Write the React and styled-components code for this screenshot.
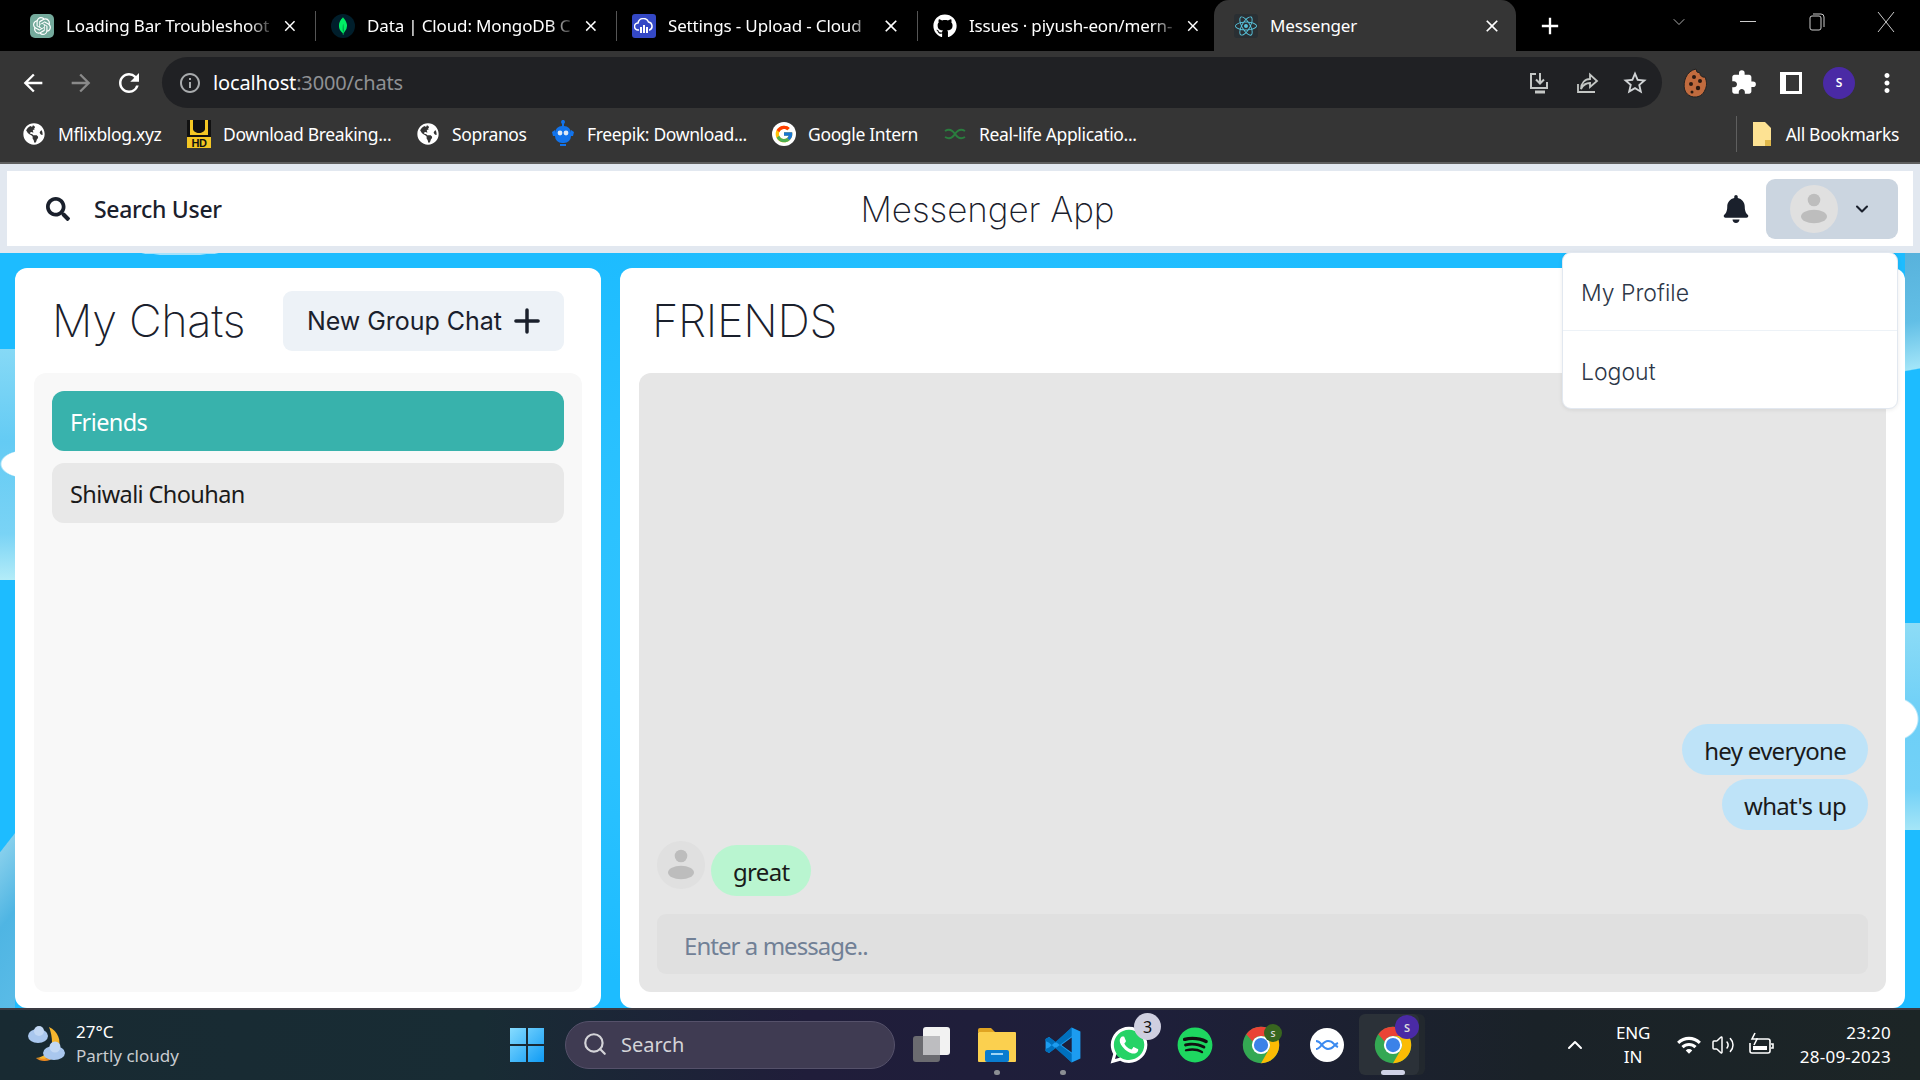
import styled, { createGlobalStyle } from "styled-components";
import {
  FaBell,
  FaSearch,
  FaGithub,
  FaReact,
  FaGlobeAmericas,
  FaWhatsapp,
  FaSpotify,
} from "react-icons/fa";
import { SiOpenai, SiMongodb } from "react-icons/si";
import { FcGoogle } from "react-icons/fc";
import {
  MdArrowBack,
  MdArrowForward,
  MdRefresh,
  MdInfoOutline,
  MdStarBorder,
  MdExtension,
  MdMoreVert,
  MdClose,
  MdAdd,
  MdWifi,
} from "react-icons/md";
import { ChevronDown, ChevronUp, Search, Volume2, Plus } from "lucide-react";

const UI = `"Noto Sans", "Open Sans", sans-serif`;
const HEAD = `Inter, "Noto Sans", sans-serif`;

const GlobalStyle = createGlobalStyle`
  * { box-sizing: border-box; }
  html, body { margin: 0; padding: 0; overflow: hidden; }
  body { font-family: ${UI}; }
`;

const Page = styled.div`
  width: 1920px;
  height: 1080px;
  display: flex;
  flex-direction: column;
  overflow: hidden;
`;

/* browser chrome */
const TabStrip = styled.div`
  height: 51px;
  background: #000;
  display: flex;
  padding-left: 15px;
  color: #fff;
`;
const Tab = styled.div`
  position: relative;
  width: ${(p) => (p.$active ? "302px" : "301px")};
  margin-left: ${(p) => (p.$active ? "-5px" : "0")};
  padding: 0 ${(p) => (p.$active ? "14px" : "17px")} 0 ${(p) => (p.$active ? "20px" : "15px")};
  display: flex;
  align-items: center;
  gap: 12px;
  font-size: 17px;
  letter-spacing: -0.15px;
  background: ${(p) => (p.$active ? "#353535" : "transparent")};
  border-radius: 15px 15px 0 0;
  z-index: ${(p) => (p.$active ? 1 : 0)};
  &::after {
    content: "";
    display: ${(p) => (p.$sep ? "block" : "none")};
    position: absolute;
    right: 0;
    top: 11px;
    height: 30px;
    width: 1px;
    background: #555;
  }
`;
const TabTitle = styled.span`
  flex: 1;
  white-space: nowrap;
  mask-image: ${(p) =>
    p.$fade ? "linear-gradient(90deg, #000 90%, rgba(0, 0, 0, 0.25) 100%)" : "none"};
`;
const Favicon = styled.span`
  width: 24px;
  height: 24px;
  flex: none;
  display: flex;
  align-items: center;
  justify-content: center;
  border-radius: ${(p) => p.$radius || "3px"};
  background: ${(p) => p.$bg || "transparent"};
`;
const NewTab = styled.div`
  margin-left: 20px;
  height: 51px;
  display: flex;
  align-items: center;
`;
const WinControls = styled.div`
  margin-left: auto;
  display: flex;
`;
const WinSlot = styled.div`
  width: 68.75px;
  height: 44px;
  display: flex;
  align-items: center;
  justify-content: center;
  color: #ccc;
`;

const Toolbar = styled.div`
  height: 57px;
  padding: 6px 0 0 9px;
  background: #353535;
  display: flex;
  align-items: center;
  color: #fff;
`;
const ToolSlot = styled.div`
  width: 48px;
  height: 48px;
  flex: none;
  display: flex;
  align-items: center;
  justify-content: center;
  color: ${(p) => p.$color || "#fff"};
`;
const Omnibox = styled.div`
  width: 1500px;
  height: 51px;
  margin: 0 9px;
  padding: 0 3px 0 16px;
  background: #202124;
  border-radius: 26px;
  display: flex;
  align-items: center;
`;
const UrlText = styled.div`
  margin-left: 11px;
  flex: 1;
  font-size: 20px;
  letter-spacing: -0.15px;
  color: #8f9194;
  & b {
    font-weight: 400;
    color: #fff;
  }
`;
const ProfileDot = styled.div`
  width: 32px;
  height: 32px;
  border-radius: 50%;
  background: #4a2aa5;
  color: #fff;
  font-size: 12px;
  font-weight: 600;
  display: flex;
  align-items: center;
  justify-content: center;
`;

const BookmarkBar = styled.div`
  height: 56px;
  padding: 0 0 2px 22px;
  background: #353535;
  border-bottom: 2px solid #5f5f5f;
  display: flex;
  align-items: center;
  color: #fff;
  font-size: 17.5px;
  letter-spacing: -0.35px;
`;
const Bookmark = styled.div`
  display: flex;
  align-items: center;
  gap: 12px;
  margin-right: 24px;
  white-space: nowrap;
`;
const BookmarkIcon = styled.span`
  width: 24px;
  height: 28px;
  flex: none;
  display: flex;
  align-items: center;
  justify-content: center;
`;
const GoogleChip = styled.span`
  width: 24px;
  height: 24px;
  border-radius: 50%;
  background: #fff;
  display: flex;
  align-items: center;
  justify-content: center;
`;
const BookmarkLabel = styled.span`
  display: block;
  width: ${(p) => p.$w}px;
`;
const AllBookmarks = styled.div`
  margin-left: auto;
  padding: 0 21px 0 16px;
  height: 36px;
  display: flex;
  align-items: center;
  gap: 15px;
  border-left: 1px solid #5f5f5f;
`;

/* messenger app */
const HeaderWrap = styled.div`
  padding: 7px;
  background: #e2e8f0;
`;
const Header = styled.header`
  height: 75px;
  padding: 0 15px 0 39px;
  background: #fff;
  display: flex;
  align-items: center;
  justify-content: space-between;
`;
const SearchButton = styled.div`
  width: 207px;
  display: flex;
  align-items: center;
  gap: 24px;
  font-size: 23px;
  font-weight: 500;
  letter-spacing: -0.3px;
  color: #1a202c;
`;
const Logo = styled.div`
  font-family: ${HEAD};
  font-weight: 200;
  font-size: 35px;
  letter-spacing: -0.05px;
  color: #1a202c;
`;
const HeaderRight = styled.div`
  display: flex;
  align-items: center;
  gap: 16px;
  color: #1a202c;
`;
const BellWrap = styled.div`
  display: flex;
`;
const ProfileWrap = styled.div`
  position: relative;
`;
const ProfileButton = styled.div`
  width: 132px;
  height: 60px;
  padding-left: 24px;
  background: #cbd5e0;
  border-radius: 9px;
  display: flex;
  align-items: center;
  gap: 14px;
`;
const AvatarCircle = styled.div`
  width: 48px;
  height: 48px;
  flex: none;
  border-radius: 50%;
`;
const Menu = styled.div`
  position: absolute;
  top: 73px;
  right: 0;
  width: 336px;
  height: 157px;
  background: #fff;
  border: 1px solid #e2e8f0;
  border-radius: 9px;
  box-shadow: 0 1px 4px rgba(0, 0, 0, 0.08);
  z-index: 5;
`;
const MenuItem = styled.div`
  height: ${(p) => (p.$first ? "78px" : "77px")};
  padding: ${(p) => (p.$first ? "4px" : "6px")} 0 0 18px;
  display: flex;
  align-items: center;
  font-family: ${HEAD};
  font-weight: 300;
  font-size: 23px;
  color: #2d3748;
  border-bottom: ${(p) => (p.$first ? "1px solid #edf2f7" : "none")};
`;

const Main = styled.main`
  flex: 1;
  min-height: 0;
  padding: 15px 15px 0;
  display: flex;
  gap: 19px;
  background:
    radial-gradient(ellipse 40px 2px at 180px 0, #a5e2fb 90%, transparent 100%) no-repeat,
    radial-gradient(ellipse 25px 14px at 25px 211px, #fff 92%, transparent 100%) no-repeat,
    radial-gradient(ellipse 24px 22px at 1895px 466px, #fff 92%, transparent 100%) no-repeat,
    linear-gradient(180deg, #86d9f6 0, #64cbf4 40%, #7ad3f5 80%, #b3ecf8 100%) 0 96px / 15px 231px no-repeat,
    linear-gradient(128deg, transparent 12px, #86cfec 13px, #4fb5e3 60px, #5dbde8 135px) 0 579px / 15px 176px no-repeat,
    linear-gradient(180deg, #8ddcf6 0, #6dcff7 45%, #72d1f7 80%, #a5e5f7 100%) 1905px 370px / 15px 207px no-repeat,
    linear-gradient(170deg, #58b2dc 0, #62bfe6 55%, #a3e5f8 92%, transparent 93%) 1905px 0 / 15px 125px no-repeat,
    radial-gradient(ellipse 700px 420px at 50% 48%, #3dc9ff, #1dbcff);
`;
const SideCard = styled.section`
  width: 586px;
  padding: 23px 19px 16px 19px;
  background: #fff;
  border-radius: 12px;
  display: flex;
  flex-direction: column;
  gap: 22px;
`;
const SideHead = styled.div`
  padding: 0 18px 0 18px;
  display: flex;
  align-items: center;
  justify-content: space-between;
`;
const Title = styled.h2`
  margin: 0;
  font-family: ${HEAD};
  font-weight: 200;
  font-size: 45px;
  line-height: 60px;
  letter-spacing: -0.3px;
  color: #1a202c;
`;
const GroupButton = styled.div`
  width: 281px;
  height: 60px;
  padding-left: 24px;
  background: #edf2f7;
  border-radius: 9px;
  display: flex;
  align-items: center;
  gap: 6px;
  font-family: ${HEAD};
  font-size: 25px;
  font-weight: 400;
  letter-spacing: -0.05px;
  color: #1a202c;
`;
const ChatList = styled.div`
  flex: 1;
  padding: 18px;
  background: #f8f8f8;
  border-radius: 12px;
  display: flex;
  flex-direction: column;
  gap: 12px;
`;
const ChatRow = styled.div`
  height: 60px;
  padding: 2px 0 0 18px;
  border-radius: 12px;
  display: flex;
  align-items: center;
  font-size: 23.5px;
  letter-spacing: -0.6px;
  background: ${(p) => (p.$active ? "#38b2ac" : "#e8e8e8")};
  color: ${(p) => (p.$active ? "#fff" : "#1a1a1a")};
`;
const ChatCard = styled.section`
  flex: 1;
  padding: 23px 19px 16px 19px;
  background: #fff;
  border-radius: 12px;
  display: flex;
  flex-direction: column;
  gap: 22px;
`;
const ChatHead = styled.div`
  padding-left: 13px;
`;
const ChatPanel = styled.div`
  flex: 1;
  padding: 18px 18px 18px 18px;
  background: #e6e6e6;
  border-radius: 12px;
  display: flex;
  flex-direction: column;
  justify-content: flex-end;
`;
const Messages = styled.div`
  display: flex;
  flex-direction: column;
  margin-bottom: 18px;
`;
const MessageRow = styled.div`
  display: flex;
  justify-content: ${(p) => (p.$mine ? "flex-end" : "flex-start")};
  margin-top: ${(p) => p.$top || 0}px;
  gap: 6px;
`;
const Bubble = styled.div`
  height: 51px;
  margin-top: ${(p) => (p.$mine ? 0 : 4)}px;
  padding: 1px 22px 0;
  border-radius: 30px;
  display: flex;
  align-items: center;
  font-size: 24px;
  letter-spacing: -0.7px;
  color: #1a1a1a;
  background: ${(p) => (p.$mine ? "#bee3f8" : "#b9f5d0")};
`;
const MessageInput = styled.input`
  width: 100%;
  height: 60px;
  padding: 2px 27px 0;
  border: none;
  outline: none;
  background: #e0e0e0;
  border-radius: 9px;
  font-family: ${UI};
  font-size: 24px;
  letter-spacing: -0.95px;
  &::placeholder {
    color: #718096;
    opacity: 1;
  }
`;

/* windows taskbar */
const Taskbar = styled.footer`
  height: 72px;
  flex: none;
  border-top: 2px solid #3a3a42;
  background: linear-gradient(90deg, #182a32 0, #182c34 25%, #201d3a 42%, #1e1f3a 60%, #1a2228 80%, #1c2526 100%);
  display: flex;
  align-items: center;
  color: #fff;
`;
const Weather = styled.div`
  width: 494px;
  padding: 0 0 2px 27px;
  display: flex;
  align-items: center;
  gap: 9px;
`;
const WeatherText = styled.div`
  font-size: 17px;
  line-height: 24px;
  & small {
    display: block;
    font-size: 17px;
    color: #c8ccd0;
  }
`;
const TaskSlot = styled.div`
  position: relative;
  width: 66px;
  height: 70px;
  flex: none;
  display: flex;
  align-items: center;
  justify-content: center;
  &::before {
    content: "";
    display: ${(p) => (p.$active ? "block" : "none")};
    position: absolute;
    left: -1px;
    width: 60px;
    top: 4px;
    bottom: 5px;
    background: #2b3138;
    border-radius: 6px;
    box-shadow: 6px 0 0 #22282e;
  }
  &::after {
    content: "";
    display: ${(p) => (p.$dot || p.$active ? "block" : "none")};
    position: absolute;
    bottom: 5px;
    left: 50%;
    transform: translateX(-50%);
    width: ${(p) => (p.$active ? "24px" : "6px")};
    height: 5px;
    border-radius: 3px;
    background: ${(p) => (p.$active ? "#cfd2e6" : "#8c8f94")};
  }
  & > * {
    position: relative;
    z-index: 1;
  }
`;
const TaskIcon = styled.div`
  position: relative;
  width: 38px;
  height: 38px;
`;
const CountBadge = styled.span`
  position: absolute;
  top: -13px;
  right: -13px;
  width: 27px;
  height: 27px;
  border-radius: 50%;
  background: #cfcfe0;
  color: #111;
  font-size: 16px;
  display: flex;
  align-items: center;
  justify-content: center;
`;
const ProfileBadge = styled.span`
  position: absolute;
  top: ${(p) => (p.$large ? "-11px" : "-2px")};
  right: ${(p) => (p.$large ? "-7px" : "-2px")};
  width: ${(p) => (p.$large ? "24px" : "18px")};
  height: ${(p) => (p.$large ? "24px" : "18px")};
  border-radius: 50%;
  background: ${(p) => p.$bg};
  color: #ddd;
  font-size: ${(p) => (p.$large ? "11px" : "9px")};
  font-weight: 600;
  display: flex;
  align-items: center;
  justify-content: center;
`;
const SpotifyBack = styled.span`
  position: absolute;
  inset: 4px;
  border-radius: 50%;
  background: #111;
`;
const WhatsBack = styled.span`
  position: absolute;
  inset: 3px;
  border-radius: 50%;
  background: #25d366;
`;
const IconLayer = styled.span`
  position: absolute;
  inset: 0;
  display: flex;
  align-items: center;
  justify-content: center;
`;
const SearchPill = styled.div`
  width: 330px;
  height: 48px;
  margin: 0 3px 0 5px;
  padding: 0 0 2px 16px;
  flex: none;
  border-radius: 24px;
  background: #3f3b52;
  border: 1px solid #55516a;
  display: flex;
  align-items: center;
  gap: 13px;
  font-size: 20px;
  color: #d4d4d8;
`;
const Tray = styled.div`
  margin-left: auto;
  width: 360px;
  padding-right: 29px;
  display: flex;
  align-items: center;
  font-size: 17px;
`;
const TraySlot = styled.div`
  width: 30px;
  display: flex;
  justify-content: center;
`;
const Lang = styled.div`
  width: 46px;
  margin-left: 20px;
  text-align: center;
  line-height: 24px;
  letter-spacing: -0.2px;
`;
const StatusIcons = styled.div`
  margin-left: 20px;
  display: flex;
  align-items: center;
  gap: 9px;
`;
const BatteryWrap = styled.div`
  margin-left: 13px;
  display: flex;
`;
const Clock = styled.div`
  margin-left: auto;
  text-align: right;
  line-height: 24px;
  letter-spacing: 0.25px;
`;

const UserAvatar = () => (
  <AvatarCircle>
    <svg width="48" height="48" viewBox="0 0 48 48">
      <circle cx="24" cy="24" r="24" fill="#e0e0e0" />
      <circle cx="24" cy="15" r="6.3" fill="#bdbdbd" />
      <ellipse cx="24" cy="31.5" rx="13" ry="6.8" fill="#bdbdbd" />
    </svg>
  </AvatarCircle>
);

const ChromeLogo = ({ size = 38 }) => (
  <svg width={size} height={size} viewBox="0 0 48 48">
    <circle cx="24" cy="24" r="23" fill="#34a853" />
    <path d="M24 1a23 23 0 0 1 19.9 11.5H24a11.5 11.5 0 0 0-10.6 7L5.4 10.3A23 23 0 0 1 24 1Z" fill="#ea4335" />
    <path d="M43.9 12.5H24a11.5 11.5 0 0 1 10 17.2L24 47a23 23 0 0 0 19.9-34.5Z" fill="#fbbc04" />
    <circle cx="24" cy="24" r="11.5" fill="#fff" />
    <circle cx="24" cy="24" r="9" fill="#3b82e8" />
  </svg>
);

const CloudinaryMark = () => (
  <svg width="20" height="16" viewBox="0 0 20 16" fill="none" stroke="#fff">
    <path d="M5 12H4a3.5 3.5 0 0 1 0-7 5.5 5.5 0 0 1 10.5-1A4.2 4.2 0 0 1 15.5 12H15" strokeWidth="1.5" />
    <path d="M7 9v6M10 7v8M13 9v6" strokeWidth="2" />
  </svg>
);

const UhdMark = () => (
  <svg width="24" height="28" viewBox="0 0 24 28">
    <rect width="24" height="28" fill="#f3c623" />
    <path d="M6 0v9c0 2 3 4 6 4s6-2 6-4V0Z" fill="#111" />
    <path d="M0 0h3v15H0ZM21 0h3v15h-3Z" fill="#111" />
    <rect y="15" width="24" height="2" fill="#111" />
    <text x="12" y="27" fontSize="11" fontWeight="700" textAnchor="middle" fill="#111" fontFamily="Liberation Sans">HD</text>
  </svg>
);

const FreepikMark = () => (
  <svg width="24" height="28" viewBox="0 0 24 28">
    <path d="M12 0v6" stroke="#1273eb" strokeWidth="2" />
    <circle cx="12" cy="2" r="2" fill="#1273eb" />
    <path d="M1 12l3-2 1 6H2ZM23 12l-3-2-1 6h3Z" fill="#1273eb" />
    <rect x="4" y="6" width="16" height="17" rx="7" fill="#1273eb" />
    <circle cx="9" cy="13" r="2.4" fill="#dfe9f6" />
    <circle cx="15" cy="13" r="2.4" fill="#dfe9f6" />
    <rect x="9" y="24" width="6" height="2" fill="#1273eb" />
  </svg>
);

const RealLifeMark = () => (
  <svg width="24" height="24" viewBox="0 0 24 24" fill="none" stroke="#2a7d3e" strokeWidth="2">
    <path d="M2 9c5-3 8 0 10 3s5 6 10 3M2 15c5 3 8 0 10-3s5-6 10-3" />
  </svg>
);

const DownloadIcon = () => (
  <svg width="24" height="24" viewBox="0 0 24 24" fill="none" stroke="#c4c7c5" strokeWidth="2">
    <path d="M9 3H4v14h16v-6" />
    <path d="M13 2v10M9 8.5l4 4 4-4" />
    <path d="M8 21h10" strokeWidth="3" />
  </svg>
);

const ShareIcon = () => (
  <svg width="24" height="24" viewBox="0 0 24 24" fill="none" stroke="#c4c7c5" strokeWidth="1.8">
    <path d="M3 13v8h17" />
    <path d="M6 18c0-6 4-10 9-10V3.5l7 6.5-7 6v-4c-4 0-7 2-9 6Z" />
  </svg>
);

const CookieIcon = () => (
  <svg width="24" height="30" viewBox="0 0 24 30">
    <path d="M13 1a4 4 0 0 0 4 4 4 4 0 0 0 5 4c2 5 2 9 0 13-2 5-6 7-10 7S3 27 1.500 21C0 14 3 3 13 1Z" fill="#c16b3e" stroke="#222" strokeWidth="1" />
    <g fill="#2b1a12">
      <circle cx="11" cy="9" r="2" />
      <circle cx="17" cy="13" r="2" />
      <circle cx="8" cy="16" r="2" />
      <circle cx="15" cy="20" r="2.200" />
      <circle cx="9" cy="24" r="1.500" />
    </g>
  </svg>
);

const SidePanelIcon = () => (
  <svg width="22" height="22" viewBox="0 0 22 22">
    <path d="M0 0h22v22H0Z M6 3v16h13V3Z" fill="#fff" fillRule="evenodd" />
  </svg>
);

const FolderMark = () => (
  <svg width="18" height="24" viewBox="0 0 18 24">
    <path d="M0 0h12l6 6v18H0Z" fill="#fde293" />
    <path d="M12 18h6v6h-6Z" fill="#e0b84a" />
  </svg>
);

const WeatherIcon = () => (
  <svg width="40" height="40" viewBox="0 0 40 40">
    <path d="M22 3c9 4 13 14 9 23-4 8-13 11-22 8 9-1 15-7 16-15 0-6-1-11-3-16Z" fill="#f5b52e" />
    <path d="M9 34c8 2 16 0 20-4l-6 6c-5 2-11 1-14-2Z" fill="#ef8a1f" />
    <ellipse cx="11" cy="12" rx="10" ry="7" fill="#a9c7ee" />
    <circle cx="12" cy="7" r="5" fill="#c2d8f4" />
    <ellipse cx="27" cy="29" rx="11" ry="7" fill="#a9c7ee" />
    <circle cx="28" cy="23" r="5.500" fill="#c2d8f4" />
  </svg>
);

const WindowsLogo = () => (
  <svg width="36" height="36" viewBox="0 0 36 36">
    <defs>
      <linearGradient id="winLogo" x1="0" y1="0" x2="1" y2="1">
        <stop offset="0" stopColor="#86dcff" />
        <stop offset="1" stopColor="#0f9bf5" />
      </linearGradient>
    </defs>
    <path d="M1 1h16v16H1ZM19 1h16v16H19ZM1 19h16v16H1ZM19 19h16v16H19Z" fill="url(#winLogo)" />
  </svg>
);

const TaskViewIcon = () => (
  <svg width="38" height="38" viewBox="0 0 38 38">
    <rect x="1" y="10" width="27" height="26" rx="3" fill="#6b6b70" />
    <rect x="11" y="1" width="27" height="28" rx="3" fill="#f2f2f2" />
    <rect x="11" y="10" width="17" height="19" fill="#bdbdc0" />
  </svg>
);

const ExplorerIcon = () => (
  <svg width="38" height="38" viewBox="0 0 38 38">
    <path d="M0 4a2 2 0 0 1 2-2h11l4 4H0Z" fill="#e0a422" />
    <rect y="6" width="38" height="30" rx="1" fill="#fbd04f" />
    <rect x="7" y="24" width="24" height="12" rx="2" fill="#0a7cd0" />
    <rect x="13" y="27" width="12" height="2" fill="#9fd4f5" />
  </svg>
);

const VsCodeIcon = () => (
  <svg width="38" height="38" viewBox="0 0 24 24">
    <path d="M17.500 1L23 3.500v17L17.500 23 7.500 13.600 3.200 17 1 15.800V8.200L3.200 7l4.300 3.400Z M17.500 7.200L11 12l6.500 4.800Z" fill="#1c9cf0" fillRule="evenodd" />
    <path d="M1 8.200L3.200 7l14.300 10.600v5.400L3.200 10.500 1 9.500ZM1 15.800L3.200 17 17.500 6.500V1L3.200 13.500 1 14.500Z" fill="#0070bd" />
  </svg>
);

const RelayIcon = () => (
  <svg width="34" height="34" viewBox="0 0 34 34" fill="none" stroke="#3b8af0" strokeWidth="2">
    <circle cx="17" cy="17" r="17" fill="#fff" stroke="none" />
    <path d="M6 13c6 0 6 8 12 8s5-4 10-6" />
    <path d="M6 21c5 0 6-8 12-8s5 4 10 6" />
  </svg>
);

const BatteryIcon = () => (
  <svg width="26" height="26" viewBox="0 0 26 26" fill="none" stroke="#fff" strokeWidth="1.6">
    <path d="M8 7h12a2 2 0 0 1 2 2v10a2 2 0 0 1-2 2H4a2 2 0 0 1-2-2v-8" />
    <path d="M23 12h2v4h-2" />
    <path d="M7 1L4 7h5l-3 6" />
    <rect x="5" y="14" width="14" height="4" fill="#fff" stroke="none" />
  </svg>
);

const tabs = [
  { title: "Loading Bar Troubleshoot", icon: <Favicon $bg="#74aa9c" $radius="5px"><SiOpenai size={18} color="#fff" /></Favicon>, sep: true },
  { title: "Data | Cloud: MongoDB C", icon: <Favicon $bg="#001e2b" $radius="50%"><SiMongodb size={18} color="#00ed64" /></Favicon>, sep: true },
  { title: "Settings - Upload - Cloud", icon: <Favicon $bg="#3448c5"><CloudinaryMark /></Favicon>, sep: true },
  { title: "Issues · piyush-eon/mern-", icon: <Favicon><FaGithub size={24} color="#fff" /></Favicon> },
];

const bookmarks = [
  { label: "Mflixblog.xyz", w: 105, icon: <FaGlobeAmericas size={22} /> },
  { label: "Download Breaking...", w: 169, icon: <UhdMark /> },
  { label: "Sopranos", w: 75, icon: <FaGlobeAmericas size={22} /> },
  { label: "Freepik: Download...", w: 161, icon: <FreepikMark /> },
  { label: "Google Intern", w: 111, icon: <GoogleChip><FcGoogle size={20} /></GoogleChip> },
  { label: "Real-life Applicatio...", w: 163, icon: <RealLifeMark /> },
];

const App = () => {
  return (
    <Page>
      <GlobalStyle />
      <TabStrip>
        {tabs.map((t) => (
          <Tab key={t.title} $sep={t.sep}>
            {t.icon}
            <TabTitle $fade>{t.title}</TabTitle>
            <MdClose size={20} />
          </Tab>
        ))}
        <Tab $active>
          <Favicon $bg="#2a2f33"><FaReact size={22} color="#58c4dc" /></Favicon>
          <TabTitle>Messenger</TabTitle>
          <MdClose size={20} />
        </Tab>
        <NewTab>
          <MdAdd size={28} />
        </NewTab>
        <WinControls>
          <WinSlot><ChevronDown size={20} strokeWidth={1} /></WinSlot>
          <WinSlot>
            <svg width="16" height="2"><rect width="16" height="1" fill="#ccc" /></svg>
          </WinSlot>
          <WinSlot>
            <svg width="16" height="18" viewBox="0 0 16 18" fill="none" stroke="#ccc">
              <rect x="1" y="3" width="11" height="14" rx="2" />
              <path d="M4 1h8a3 3 0 0 1 3 3v10" />
            </svg>
          </WinSlot>
          <WinSlot>
            <svg width="18" height="22" viewBox="0 0 18 22" stroke="#ccc" fill="none">
              <path d="M1 1l16 20M17 1L1 21" />
            </svg>
          </WinSlot>
        </WinControls>
      </TabStrip>

      <Toolbar>
        <ToolSlot><MdArrowBack size={28} /></ToolSlot>
        <ToolSlot $color="#8a8a8a"><MdArrowForward size={28} /></ToolSlot>
        <ToolSlot><MdRefresh size={30} /></ToolSlot>
        <Omnibox>
          <MdInfoOutline size={24} color="#a8abad" />
          <UrlText><b>localhost</b>:3000/chats</UrlText>
          <ToolSlot><DownloadIcon /></ToolSlot>
          <ToolSlot><ShareIcon /></ToolSlot>
          <ToolSlot $color="#d0d3d5"><MdStarBorder size={28} /></ToolSlot>
        </Omnibox>
        <ToolSlot><CookieIcon /></ToolSlot>
        <ToolSlot><MdExtension size={27} /></ToolSlot>
        <ToolSlot><SidePanelIcon /></ToolSlot>
        <ToolSlot><ProfileDot>S</ProfileDot></ToolSlot>
        <ToolSlot><MdMoreVert size={30} /></ToolSlot>
      </Toolbar>

      <BookmarkBar>
        {bookmarks.map((b) => (
          <Bookmark key={b.label}>
            <BookmarkIcon>{b.icon}</BookmarkIcon>
            <BookmarkLabel $w={b.w}>{b.label}</BookmarkLabel>
          </Bookmark>
        ))}
        <AllBookmarks>
          <FolderMark />
          All Bookmarks
        </AllBookmarks>
      </BookmarkBar>

      <HeaderWrap>
        <Header>
          <SearchButton>
            <FaSearch size={24} />
            Search User
          </SearchButton>
          <Logo>Messenger App</Logo>
          <HeaderRight>
            <BellWrap><FaBell size={28} /></BellWrap>
            <ProfileWrap>
              <ProfileButton>
                <UserAvatar />
                <ChevronDown size={20} strokeWidth={2.5} />
              </ProfileButton>
              <Menu>
                <MenuItem $first>My Profile</MenuItem>
                <MenuItem>Logout</MenuItem>
              </Menu>
            </ProfileWrap>
          </HeaderRight>
        </Header>
      </HeaderWrap>

      <Main>
        <SideCard>
          <SideHead>
            <Title>My Chats</Title>
            <GroupButton>
              New Group Chat
              <Plus size={38} strokeWidth={2.2} />
            </GroupButton>
          </SideHead>
          <ChatList>
            <ChatRow $active>Friends</ChatRow>
            <ChatRow>Shiwali Chouhan</ChatRow>
          </ChatList>
        </SideCard>
        <ChatCard>
          <ChatHead>
            <Title>FRIENDS</Title>
          </ChatHead>
          <ChatPanel>
            <Messages>
              <MessageRow $mine><Bubble $mine>hey everyone</Bubble></MessageRow>
              <MessageRow $mine $top={4}><Bubble $mine>what's up</Bubble></MessageRow>
              <MessageRow $top={11}>
                <UserAvatar />
                <Bubble>great</Bubble>
              </MessageRow>
            </Messages>
            <MessageInput placeholder="Enter a message.." readOnly />
          </ChatPanel>
        </ChatCard>
      </Main>

      <Taskbar>
        <Weather>
          <WeatherIcon />
          <WeatherText>
            27°C
            <small>Partly cloudy</small>
          </WeatherText>
        </Weather>
        <TaskSlot><WindowsLogo /></TaskSlot>
        <SearchPill>
          <Search size={26} />
          Search
        </SearchPill>
        <TaskSlot><TaskViewIcon /></TaskSlot>
        <TaskSlot $dot><ExplorerIcon /></TaskSlot>
        <TaskSlot $dot><VsCodeIcon /></TaskSlot>
        <TaskSlot>
          <TaskIcon>
            <WhatsBack />
            <IconLayer><FaWhatsapp size={42} color="#fff" /></IconLayer>
            <CountBadge>3</CountBadge>
          </TaskIcon>
        </TaskSlot>
        <TaskSlot>
          <TaskIcon>
            <SpotifyBack />
            <IconLayer><FaSpotify size={36} color="#1ed760" /></IconLayer>
          </TaskIcon>
        </TaskSlot>
        <TaskSlot>
          <TaskIcon>
            <ChromeLogo />
            <ProfileBadge $bg="#38661f">S</ProfileBadge>
          </TaskIcon>
        </TaskSlot>
        <TaskSlot><RelayIcon /></TaskSlot>
        <TaskSlot $active>
          <TaskIcon>
            <ChromeLogo />
            <ProfileBadge $large $bg="#4a2aa5">S</ProfileBadge>
          </TaskIcon>
        </TaskSlot>
        <Tray>
          <TraySlot><ChevronUp size={24} /></TraySlot>
          <Lang>ENG<br />IN</Lang>
          <StatusIcons>
            <MdWifi size={26} />
            <Volume2 size={24} strokeWidth={1.5} />
          </StatusIcons>
          <BatteryWrap><BatteryIcon /></BatteryWrap>
          <Clock>23:20<br />28-09-2023</Clock>
        </Tray>
      </Taskbar>
    </Page>
  );
};

export default App;
